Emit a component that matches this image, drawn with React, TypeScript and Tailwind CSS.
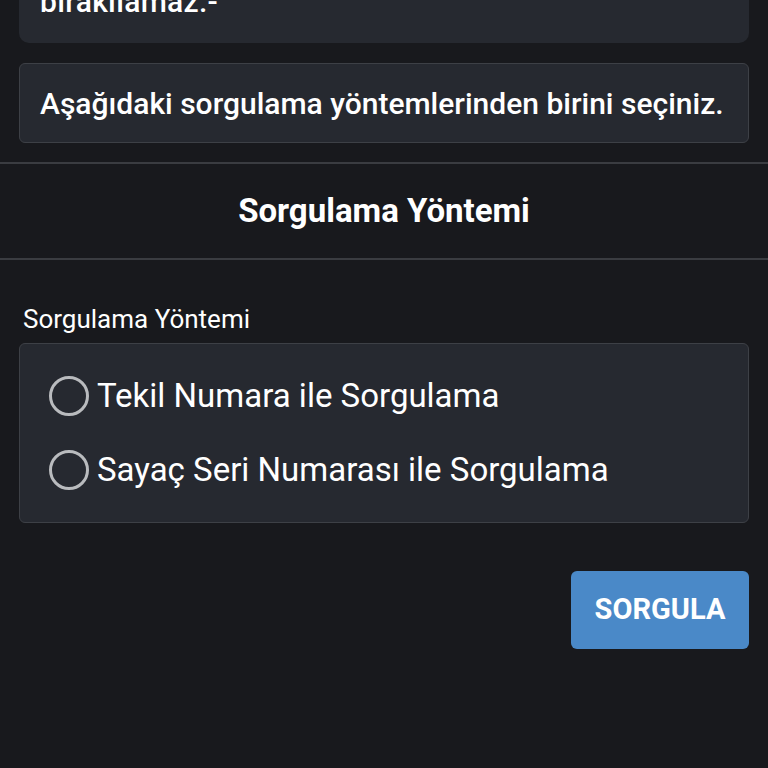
import { useState } from 'react';

const options = ['Tekil Numara ile Sorgulama', 'Sayaç Seri Numarası ile Sorgulama'];

export default function App() {
  const [selected, setSelected] = useState<number | null>(null);

  return (
    <div
      className="min-h-screen bg-[#18191d] text-white overflow-hidden"
      style={{ fontFamily: 'Roboto, "Noto Sans", sans-serif' }}
    >
      <div className="px-[19px]">
        <div className="-mt-[20px] h-[63px] rounded-[10px] bg-[#262930] px-[21px] pt-[4px]">
          <p className="text-[30px] leading-[36px] font-medium tracking-[0.3px]">bırakılamaz.-</p>
        </div>

        <div className="mt-[20px] h-[80px] rounded-[6px] border border-[#3d4046] bg-[#262930] px-[20px] flex items-center">
          <p className="text-[30px] font-medium whitespace-nowrap">
            Aşağıdaki sorgulama yöntemlerinden birini seçiniz.
          </p>
        </div>
      </div>

      <div className="mt-[19px] border-t-2 border-b-2 border-[#3a3c41] h-[98px] flex items-center justify-center">
        <h2 className="text-[33px] font-bold">Sorgulama Yöntemi</h2>
      </div>

      <div className="px-[19px]">
        <label className="block mt-[44px] pl-[4px] text-[26px] leading-[30px]">Sorgulama Yöntemi</label>

        <div className="mt-[9px] h-[180px] rounded-[6px] border border-[#3d4046] bg-[#262930] px-[29px] flex flex-col justify-center gap-[34px]">
          {options.map((opt, i) => (
            <button
              key={opt}
              onClick={() => setSelected(i)}
              className="flex items-center gap-[8px] text-left"
            >
              <span className="w-[40px] h-[40px] shrink-0 rounded-full border-[3px] border-[#b9bbbe] flex items-center justify-center">
                {selected === i && <span className="w-[20px] h-[20px] rounded-full bg-[#4a8acb]" />}
              </span>
              <span className="text-[33px] leading-[40px] whitespace-nowrap">{opt}</span>
            </button>
          ))}
        </div>

        <div className="mt-[48px] flex justify-end">
          <button className="w-[178px] h-[78px] rounded-[6px] bg-[#4a89c8] text-[29px] font-bold text-white">
            SORGULA
          </button>
        </div>
      </div>
    </div>
  );
}
